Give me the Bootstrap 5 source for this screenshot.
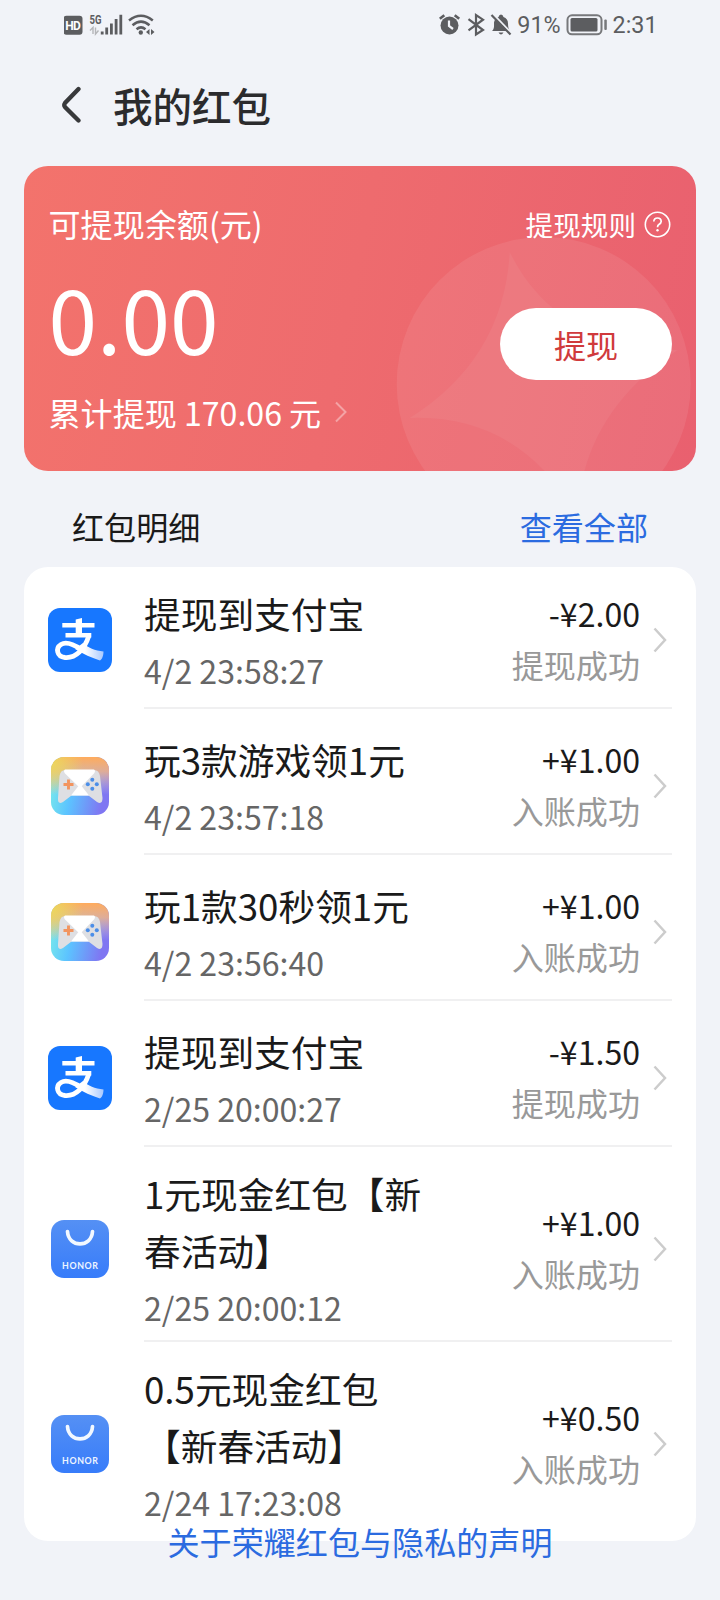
<!DOCTYPE html>
<html lang="zh-CN">
<head>
<meta charset="utf-8">
<meta name="viewport" content="width=device-width, initial-scale=1">
<title>我的红包</title>
<link href="https://cdn.jsdelivr.net/npm/bootstrap@5.3.0/dist/css/bootstrap.min.css" rel="stylesheet">
<style>
body{background:#f1f3f8;font-family:"Noto Sans CJK SC",sans-serif;font-size:32.1px;line-height:48px;color:#1a1a1a;text-spacing-trim:space-all;width:720px;height:1600px;overflow:hidden}
svg{display:block;flex:none}
.statusbar{height:48px;padding:1px 64px 0;color:#5c5d60;font:400 23.3px/48px Roboto,sans-serif}
.titlebar{height:114px;margin-bottom:4px;padding:0 0 0 60px}
.titlebar h1{font-size:39.5px;font-weight:500;line-height:60px;color:#2b2b2d;margin-left:31px}
.balance{height:305px;margin:0 24px;border-radius:24px;background:linear-gradient(102deg,#f3736c 0%,#ee6b6e 48%,#e9606f 100%);color:#fff;padding:0 25px 0 24.5px}
.deco{right:0;bottom:0}
.sum-label{line-height:46px}
.rule-link{font-size:27.6px}
.amount-big{font-size:87.5px;line-height:110px;padding-top:14px}
.draw-btn{width:172px;height:72px;border-radius:36px;background:#fff;color:#d03a3c;font-size:32.1px;line-height:68px;padding:0;border:0}
.section-head{height:96px;padding:14px 72px 0}
.accent{color:#2b6be0}
.records{margin:0 24px;border-radius:24px;background:#fff;height:974px}
.record{height:146px;padding:0 24px}
.record.tall{height:195px}
.pic{width:64px;display:flex;justify-content:center;margin-right:32px}
.info{line-height:57px;padding-top:3px;white-space:nowrap}
.name{font-size:36.7px}
.when{color:#666}
.state{line-height:51px;text-align:right;margin-right:13px;margin-top:-2px}
.state .res{color:#999}
.chev{margin-right:5px}
.record:not(:last-child)::after{content:"";position:absolute;left:120px;right:24px;bottom:4px;height:2px;background:#f0f0f1}
.notice{margin-top:-24px;line-height:48px}
</style>
</head>
<body>
<svg width="0" height="0" class="position-absolute">
<defs>
<linearGradient id="tail" x1="0" x2="1"><stop offset=".35" stop-color="#fff"/><stop offset="1" stop-color="#a9c9ff"/></linearGradient>
<linearGradient id="pad1" x1="0" y1="0" x2="1" y2=".2"><stop offset="0" stop-color="#7cf0e8"/><stop offset=".45" stop-color="#5cc3ff"/><stop offset="1" stop-color="#7f76f2"/></linearGradient>
<linearGradient id="pad2" x1="0" y1="0" x2="0" y2="1"><stop offset="0" stop-color="#ffab5c"/><stop offset=".25" stop-color="#f0b488" stop-opacity=".85"/><stop offset=".65" stop-color="#d3c5d8" stop-opacity="0"/></linearGradient>
<radialGradient id="pad3" cx=".0" cy=".1" r=".55"><stop offset="0" stop-color="#ecd85c"/><stop offset="1" stop-color="#ecd85c" stop-opacity="0"/></radialGradient>
<linearGradient id="bag" x1="0" y1="0" x2="0" y2="1"><stop offset="0" stop-color="#5590f4"/><stop offset="1" stop-color="#377cfa"/></linearGradient>
<symbol id="alipay" viewBox="0 0 64 64">
<rect width="64" height="64" rx="12" fill="#1777ff"/>
<path d="M35 35C40 40 47 42.500 55.500 43.500C55.500 47 54.500 51 52 52.500C44 50 35 46 27 41Z" fill="url(#tail)"/>
<path d="M33 41.500C25 36 18 33.500 13 36.500C7.500 40 8.500 48.500 17 49.500C28 50.500 36.500 41 40.800 28" fill="none" stroke="#fff" stroke-width="4.800"/>
<path d="M14.300 17.300H46.500M17.500 27.300H43.300" fill="none" stroke="#fff" stroke-width="4.600"/>
<path d="M27.700 11.500L34 10V28H27.700Z" fill="#fff"/>
</symbol>
<symbol id="game" viewBox="0 0 58 58">
<rect width="58" height="58" rx="13" fill="url(#pad1)"/><rect width="58" height="58" rx="13" fill="url(#pad2)"/><rect width="58" height="58" rx="13" fill="url(#pad3)"/>
<path d="M14 13H43Q48 13 49 19L51.500 41Q51.500 48 46 45L37.500 38.500H20.500L12 45Q6.500 48 7 41L8.500 19Q9.500 13 14 13Z" fill="#dedfe3"/>
<path d="M14 12.500H43Q45 14 43 16.500L29 31L14 16.500Q12 14 14 12.500ZM29 27L38 38.500H20Z" fill="#fff"/>
<path d="M12.500 27.500H22.500M17.500 22.500V32.500" stroke="#f2945f" stroke-width="2.900"/>
<g fill="#4b8ee8"><circle cx="41.300" cy="22.800" r="2"/><circle cx="41.300" cy="31.800" r="2"/><circle cx="36.800" cy="27.300" r="2"/><circle cx="45.800" cy="27.300" r="2"/></g>
</symbol>
<symbol id="honor" viewBox="0 0 58 58">
<rect width="58" height="58" rx="13" fill="url(#bag)"/>
<path d="M16.500 11.500C17.500 28 40.500 28 41.500 11.500" fill="none" stroke="#f2f8ff" stroke-width="3.700" stroke-linecap="round"/>
<text x="29" y="48.500" text-anchor="middle" textLength="36" font-family="Lato,sans-serif" font-weight="700" font-size="8.800" fill="#eef5ff">HONOR</text>
</symbol>
<symbol id="chev" viewBox="0 0 14 26"><path d="M1.500 1.500L12 13L1.500 24.500" fill="none" stroke="#ccc" stroke-width="2.500"/></symbol>
</defs>
</svg>

<div class="statusbar d-flex justify-content-between">
<svg width="94" height="48" viewBox="65 0.500 94 48" fill="#5c5d60">
<rect x="64.500" y="15.300" width="19" height="19" rx="3"/>
<text x="74" y="29.300" text-anchor="middle" textLength="15.500" font-family="Roboto,sans-serif" font-size="12" font-weight="700" fill="#fff">HD</text>
<text x="90.500" y="23" textLength="12" lengthAdjust="spacingAndGlyphs" font-family="Roboto,sans-serif" font-size="12" font-weight="700">5G</text>
<path d="M91 30L94 27V33.500M96.500 27V33.500L99.500 30" fill="none" stroke="#b5b6b9" stroke-width="1.400"/>
<path d="M101.800 31h2.800v3H101.800zM106.300 27h2.800v7h-2.800zM111 23h2.800v11H111zM115.700 18.500h2.800V34h-2.800zM120.400 14.300h2.800V34h-2.800z"/>
<g fill="none" stroke="#5c5d60" stroke-width="2.500"><path d="M130 20Q142 10.500 153.800 20M133.500 24.700Q142 17.500 150.500 24.700M137.500 28.700Q142 25 146.500 28.700"/></g>
<circle cx="141.800" cy="32" r="2.200"/><path d="M147 31.500L150.500 28.500V34.500ZM152 28.500L155.500 31.500L152 34.500Z"/>
</svg>
<div class="d-flex">
<svg width="76" height="48" viewBox="440 0 76 48" fill="none" stroke="#5c5d60">
<circle cx="450.500" cy="24.500" r="9" fill="#5c5d60" stroke="none"/><path d="M440.800 17.800L445.300 14.300M455.700 14.300L460.200 17.800" stroke-width="2.700"/><path d="M450 19.500V25L454 28" stroke="#f1f3f8" stroke-width="2.200"/>
<path d="M469.500 18.200L484 29L477 33.500V14L484 18.700L469.500 29.300" stroke-width="2.200"/>
<path d="M493 30C495.500 28 495 24.500 495 21.500Q495.500 17.500 499.500 16Q500 13.500 502 13.500Q504 13.500 504.500 16Q509 17.500 509 22.500Q509 28 511 30ZM499.500 31.500H504.500Q502 35.500 499.500 31.500Z" fill="#5c5d60" stroke="none"/><path d="M494 13L513 33" stroke="#f1f3f8" stroke-width="2.200"/><path d="M492.500 14L511.500 33.500" stroke-width="2.200"/>
</svg>
<span style="margin-left:2px">91%</span>
<svg width="42" height="48" viewBox="565 0.500 42 48" style="margin-left:5px"><rect x="566.500" y="14.800" width="34" height="19" rx="4.500" fill="none" stroke="#77787b" stroke-width="2"/><rect x="569.500" y="17.500" width="27" height="13.500" rx="1.500" fill="#5c5d60"/><rect x="603.300" y="19" width="2.500" height="10.500" rx="1" fill="#77787b"/></svg>
<span style="margin:0 -1.500px 0 5px">2:31</span>
</div>
</div>

<header class="titlebar d-flex align-items-center">
<svg width="22" height="38" viewBox="0 0 22 38"><path d="M18.500 3L5 17Q3.500 19 5 21L18.500 34.500" fill="none" stroke="#38393b" stroke-width="4.300" stroke-linecap="round"/></svg>
<h1 class="mb-0">我的红包</h1>
</header>

<section class="balance position-relative overflow-hidden">
<svg class="deco position-absolute" width="672" height="305" viewBox="0 0 672 305" fill="#fff"><g transform="translate(519.700 218)"><circle r="147" fill-opacity=".08"/><path fill-opacity=".05" d="M-34-132Q12-38 134-34Q38 30 34 132Q-25 30-134 34Q-40-25-34-132Z"/></g></svg>
<div class="position-relative d-flex justify-content-between align-items-start" style="height:82px;padding-top:34px">
<div class="sum-label">可提现余额(元)</div>
<div class="rule-link d-flex align-items-center"><span>提现规则</span>
<svg class="ms-2" width="27" height="27" viewBox="0 0 27 27"><circle cx="13.500" cy="13.500" r="12.200" fill="none" stroke="#fff" stroke-width="1.600"/><path d="M9.800 10.500Q10 7 13.500 7Q17 7 17.200 10.300Q17 12.200 15.200 13.300Q13.500 14.400 13.500 16.300" fill="none" stroke="#fff" stroke-width="1.700"/><circle cx="13.500" cy="19.300" r="1.200" fill="#fff"/></svg></div>
</div>
<div class="position-relative d-flex justify-content-between" style="height:132px">
<div class="amount-big">0.00</div>
<button class="btn draw-btn" style="margin:60px -1px 0 0">提现</button>
</div>
<div class="position-relative d-flex align-items-center" style="margin-top:8px">累计提现 170.06 元<svg width="12" height="22" viewBox="0 0 12 22" style="margin-left:14px"><path d="M1 1.500L10.500 11L1 20.500" fill="none" stroke="#fff" stroke-opacity=".38" stroke-width="2"/></svg></div>
</section>

<div class="section-head d-flex justify-content-between align-items-center">
<span>红包明细</span><a href="#" class="accent text-decoration-none">查看全部</a>
</div>

<main class="records">
<div class="record d-flex align-items-center position-relative"><div class="pic"><svg width="64" height="64"><use href="#alipay"/></svg></div><div class="info"><div class="name">提现到支付宝</div><div class="when">4/2 23:58:27</div></div><div class="state ms-auto"><div>-¥2.00</div><div class="res">提现成功</div></div><svg width="14" height="26" class="chev"><use href="#chev"/></svg></div>
<div class="record d-flex align-items-center position-relative"><div class="pic"><svg width="58" height="58"><use href="#game"/></svg></div><div class="info"><div class="name">玩3款游戏领1元</div><div class="when">4/2 23:57:18</div></div><div class="state ms-auto"><div>+¥1.00</div><div class="res">入账成功</div></div><svg width="14" height="26" class="chev"><use href="#chev"/></svg></div>
<div class="record d-flex align-items-center position-relative"><div class="pic"><svg width="58" height="58"><use href="#game"/></svg></div><div class="info"><div class="name">玩1款30秒领1元</div><div class="when">4/2 23:56:40</div></div><div class="state ms-auto"><div>+¥1.00</div><div class="res">入账成功</div></div><svg width="14" height="26" class="chev"><use href="#chev"/></svg></div>
<div class="record d-flex align-items-center position-relative"><div class="pic"><svg width="64" height="64"><use href="#alipay"/></svg></div><div class="info"><div class="name">提现到支付宝</div><div class="when">2/25 20:00:27</div></div><div class="state ms-auto"><div>-¥1.50</div><div class="res">提现成功</div></div><svg width="14" height="26" class="chev"><use href="#chev"/></svg></div>
<div class="record tall d-flex align-items-center position-relative"><div class="pic"><svg width="58" height="58"><use href="#honor"/></svg></div><div class="info"><div class="name">1元现金红包【新<br>春活动】</div><div class="when">2/25 20:00:12</div></div><div class="state ms-auto"><div>+¥1.00</div><div class="res">入账成功</div></div><svg width="14" height="26" class="chev"><use href="#chev"/></svg></div>
<div class="record tall d-flex align-items-center position-relative"><div class="pic"><svg width="58" height="58"><use href="#honor"/></svg></div><div class="info"><div class="name">0.5元现金红包<br>【新春活动】</div><div class="when">2/24 17:23:08</div></div><div class="state ms-auto"><div>+¥0.50</div><div class="res">入账成功</div></div><svg width="14" height="26" class="chev"><use href="#chev"/></svg></div>
</main>
<footer class="notice accent text-center position-relative">关于荣耀红包与隐私的声明</footer>
<script src="https://cdn.jsdelivr.net/npm/bootstrap@5.3.0/dist/js/bootstrap.bundle.min.js"></script>
</body>
</html>
